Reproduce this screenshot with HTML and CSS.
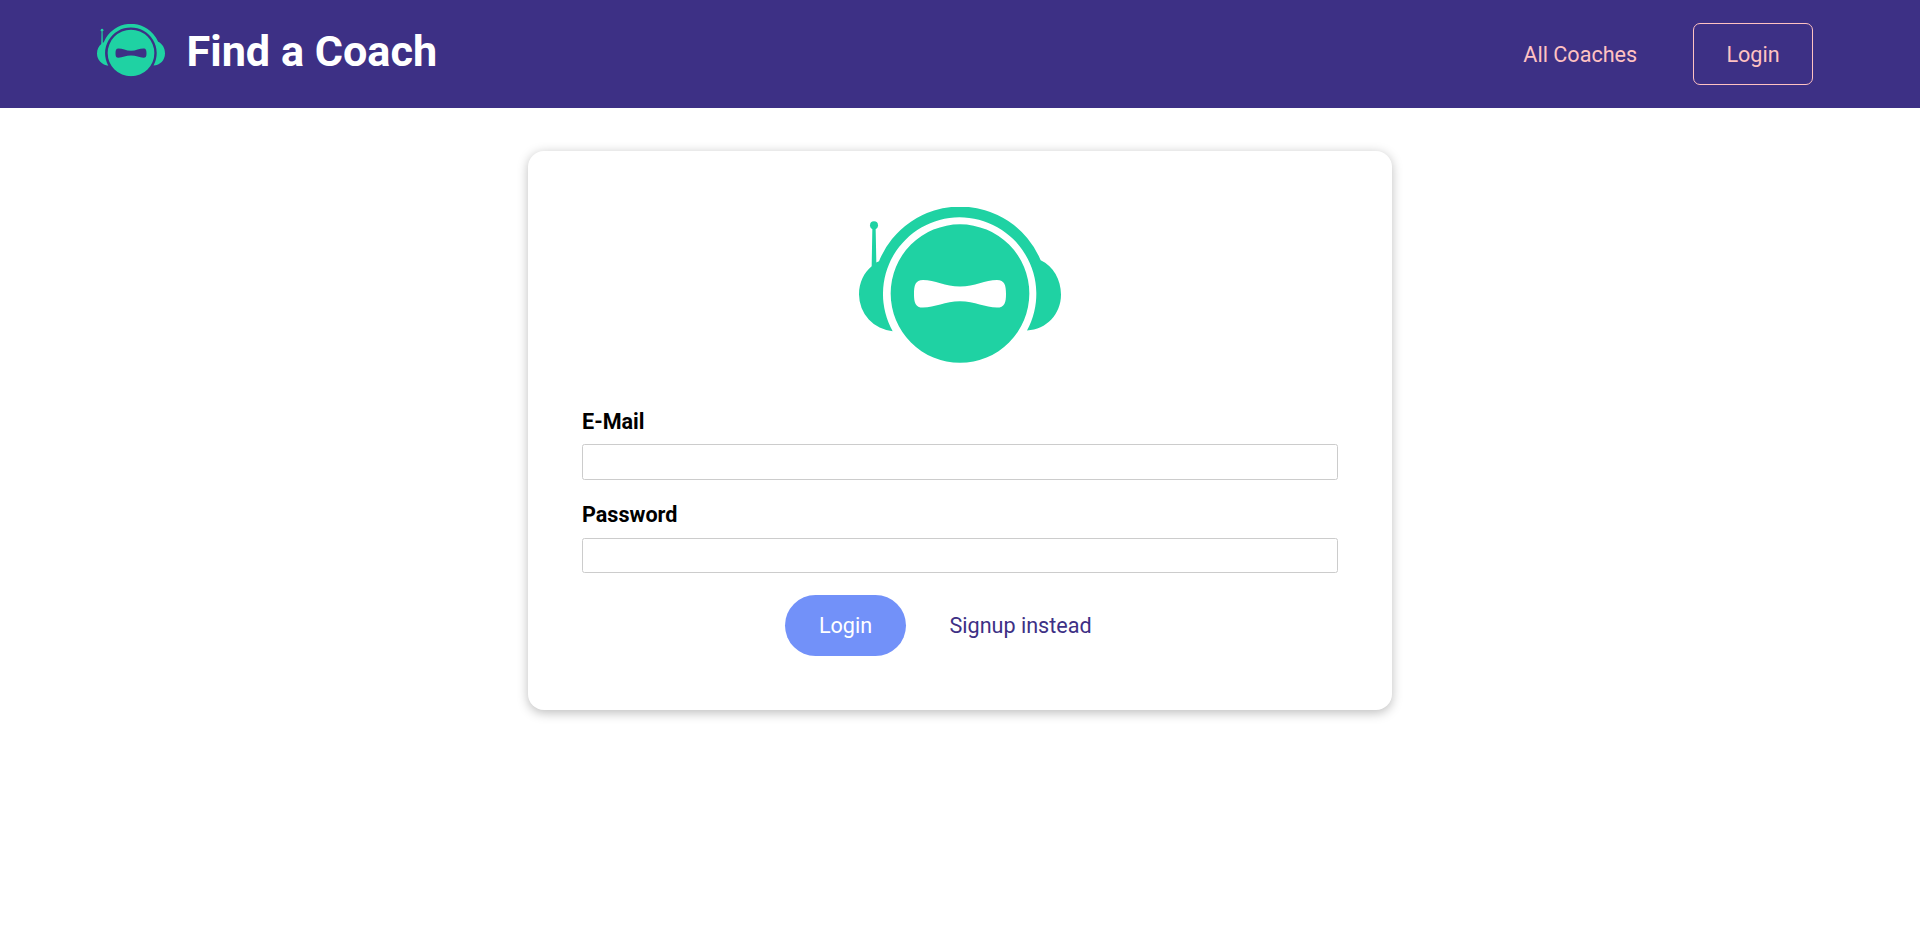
FILE: index.html
```html
<!DOCTYPE html>
<html lang="en">
<head>
<meta charset="utf-8">
<title>Find a Coach</title>
<link rel="stylesheet" href="styles.css">
</head>
<body>
<svg class="defs" width="0" height="0" aria-hidden="true">
  <symbol id="robot" viewBox="57 50 606 470" preserveAspectRatio="none">
    <path d="M158 423A110 111 0 0 1 57 313C57 276 73 246 95 228L97 115H107L109 217L117 213A262 262 0 0 1 602 210C640 228 663 268 663 313C663 372 620 418 561 421A230 230 0 1 0 158 423Z"/>
    <circle cx="102" cy="105" r="12"/>
    <path fill-rule="evenodd" d="M360 102A208 208 0 1 1 360 518A208 208 0 1 1 360 102ZM222 311C222 337 226 352 249 352C285 352 315 333 360 333C405 333 435 352 471 352C494 352 498 337 498 311C498 285 494 269 471 269C435 269 405 289 360 289C315 289 285 269 249 269C226 269 222 285 222 311Z"/>
  </symbol>
</svg>
<header class="header">
  <a class="brand">
    <svg class="brand-logo"><use href="#robot"/></svg>
    <h1 class="brand-title">Find a Coach</h1>
  </a>
  <nav class="nav">
    <a class="nav-link">All Coaches</a>
    <a class="nav-link nav-button">Login</a>
  </nav>
</header>
<main class="card">
  <svg class="card-logo"><use href="#robot"/></svg>
  <form class="form">
    <div class="field">
      <label class="label" for="email">E-Mail</label>
      <input class="input" type="email" id="email">
    </div>
    <div class="field">
      <label class="label" for="password">Password</label>
      <input class="input" type="password" id="password">
    </div>
    <div class="actions">
      <button class="button" type="button">Login</button>
      <button class="button button-flat" type="button">Signup instead</button>
    </div>
  </form>
</main>
</body>
</html>
```
FILE: styles.css
```css
* { box-sizing: border-box; }
html { font: 21.6px/25px Roboto, sans-serif; }
body { margin: 0; min-height: 100vh; background: #fff; color: #000; }
.defs { display: none; }
.header {
  display: flex;
  justify-content: space-between;
  align-items: flex-start;
  height: 108px;
  padding: 23px 107px 0 97px;
  background: #3d3085;
}
.brand { display: flex; align-items: flex-start; gap: 21.5px; color: #fff; }
.brand-logo { width: 68px; height: 52.5px; margin-top: 1.4px; fill: #1fd2a3; }
.brand-title { margin: 4px 0 0; font-size: 43.2px; line-height: 50px; font-weight: 700; }
.nav { display: flex; gap: 22.4px; }
.nav-link {
  height: 62px;
  padding: 17px 32.4px;
  border: 1px solid transparent;
  border-radius: 7px;
  color: #ffc2c2;
  line-height: 28px;
}
.nav-button { width: 120px; border-color: #ffc2c2; }
.card {
  width: 864px;
  height: 559px;
  margin: 43px auto 0;
  padding: 56px 54px 0;
  border-radius: 16px;
  background: #fff;
  box-shadow: 0 2.7px 10.8px rgba(0, 0, 0, .26);
}
.card-logo { display: block; width: 202px; height: 156.5px; margin: 0 auto; fill: #1fd2a3; }
.form { display: flex; flex-direction: column; padding-top: 45px; }
.field { height: 93.4px; }
.label { display: block; height: 35.8px; line-height: 26px; font-weight: 700; }
.input {
  display: block;
  width: 100%;
  height: 35.6px;
  padding: 3px;
  border: 1px solid #ccc;
  border-radius: 2.5px;
  font: inherit;
}
.actions { display: flex; justify-content: center; gap: 9.3px; padding-right: 9.4px; }
.button {
  height: 61px;
  padding: 0 34px;
  border: 0;
  border-radius: 40px;
  background: #7291f9;
  color: #fff;
  font: inherit;
}
.button-flat { background: transparent; color: #3d3085; }
```
